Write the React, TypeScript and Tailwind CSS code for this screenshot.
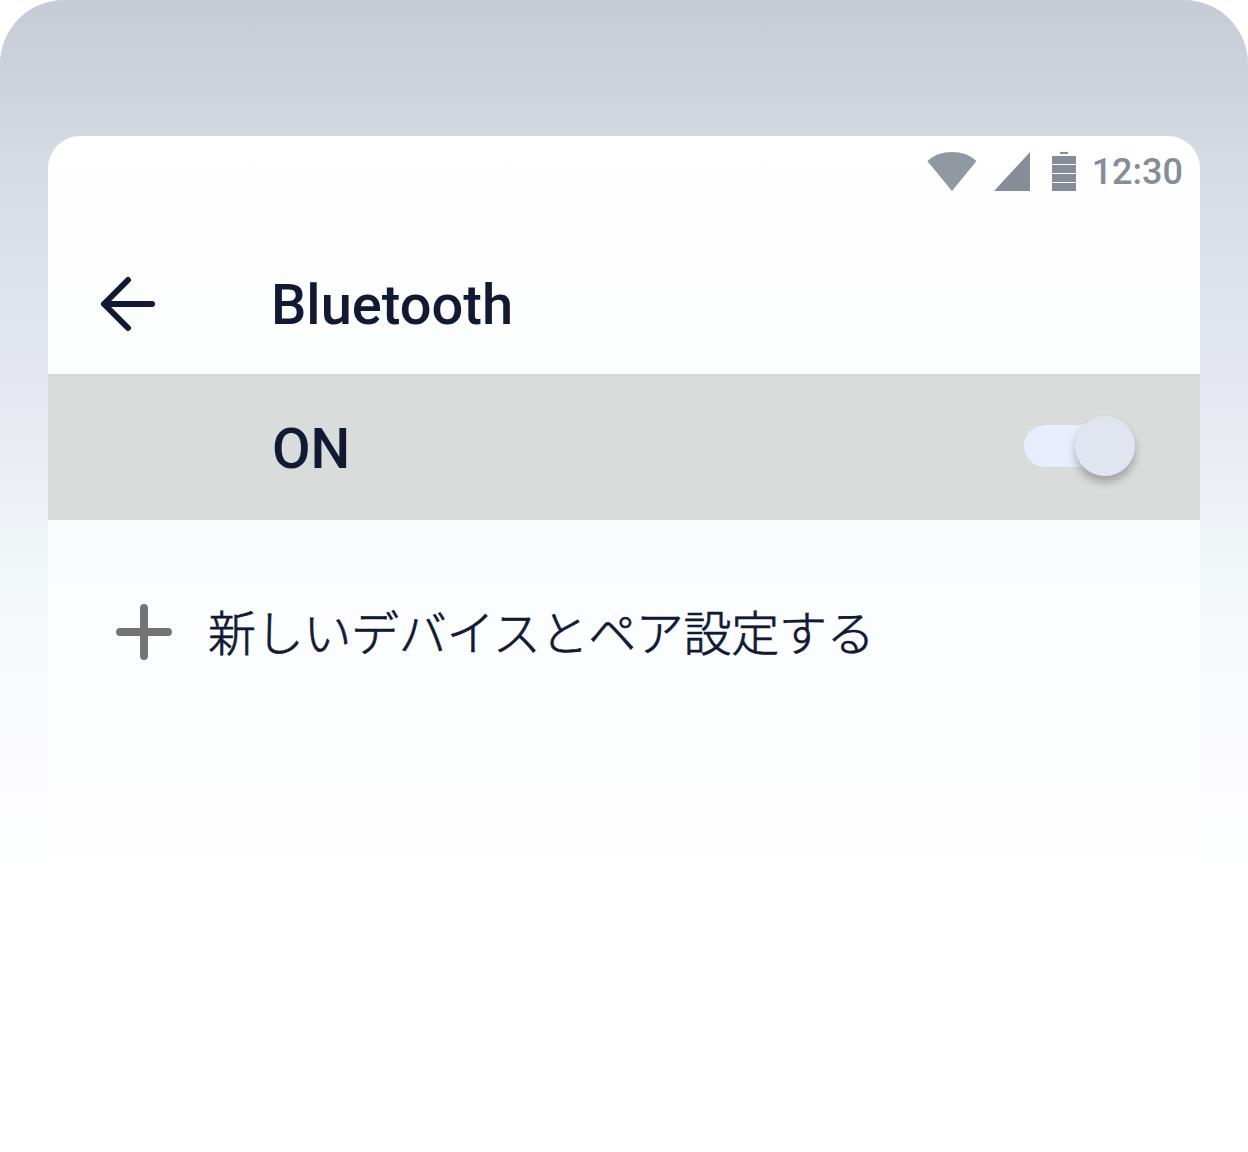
export default function App() {
  return (
    <div className="h-[1152px] w-[1248px] overflow-hidden bg-white font-[Roboto,'Noto_Sans_CJK_JP',sans-serif] text-[#101a33]">
      <div className="h-full rounded-t-[64px] bg-[linear-gradient(to_bottom,#c7cbd6_0px,#cfd3dc_90px,#d6dae2_160px,#dbdfe9_230px,#e1e5f0_330px,#e5e8ee_390px,#ebeff4_470px,#f1f6f9_560px,#f5f9fc_630px,#f9fafd_700px,#fcfcff_780px,#fdfefe_840px,#ffffff_890px)] px-12 pt-[136px]">
        <main className="h-full rounded-t-[32px] bg-[linear-gradient(to_bottom,#ffffff_0px,#fdfdfd_110px,#fcfdfd_200px,#fbfcfe_390px,#fcfdfe_500px,#fdfefe_600px,#fefefe_690px,#ffffff_760px)]">
          <div className="flex h-[72px] items-center justify-end pr-[17px] text-[#858d98]">
            <svg className="mr-[17px] h-10 w-[50px]" viewBox="0 0 50 40" fill="#9098a1">
              <path d="M.3 9Q10 0 25 0T49.500 9L25 39Z" />
            </svg>
            <svg className="mr-[21px] h-10 w-[37px]" viewBox="0 0 37 40" fill="currentColor">
              <path d="M36 0V39H0Z" />
            </svg>
            <svg className="mr-4 h-10 w-6" viewBox="0 0 24 40" fill="currentColor">
              <path d="M8 0h8v2H8zM0 4h24v8H0zM0 13h24v8H0zM0 22h24v8H0zM0 31h24v8H0z" />
            </svg>
            <span className="text-[36px] leading-[42px] font-medium">12:30</span>
          </div>
          <header className="flex h-[166px] items-center pt-[26px] pl-[52px]">
            <svg className="h-14 w-14" viewBox="0 0 56 56" fill="none" stroke="currentColor" strokeWidth="6" strokeLinecap="round" strokeLinejoin="round">
              <path d="M28 4L4 28L28 52M4 28H52" />
            </svg>
            <h1 className="mt-[2px] ml-[115px] text-[56px] font-medium">Bluetooth</h1>
          </header>
          <section className="flex h-[146px] items-center justify-between border-t-2 border-[#d6d9dc] bg-[#dadcdc] pr-[65px] pl-[224px]">
            <span className="mt-[2px] text-[56px] font-medium">ON</span>
            <button className="relative mb-1 h-[60px] w-[111px]" aria-label="Bluetooth">
              <span className="absolute top-[9px] left-0 h-[42px] w-[90px] rounded-full bg-[#e9eefe]" />
              <span className="absolute top-0 right-0 h-[60px] w-[60px] rounded-full bg-[#e1e5f0] shadow-[0_6px_8px_rgba(0,0,0,.27)]" />
            </button>
          </section>
          <div className="flex h-[224px] items-center pl-[68px]">
            <svg className="h-14 w-14" viewBox="0 0 56 56" fill="none" stroke="#747474" strokeWidth="8" strokeLinecap="round">
              <path d="M28 4V52M4 28H52" />
            </svg>
            <span className="mt-[6px] ml-9 text-[48px] leading-none font-light tracking-[-0.3px] whitespace-nowrap [-webkit-text-stroke:0.7px_currentColor]">新しいデバイスとペア設定する</span>
          </div>
        </main>
      </div>
    </div>
  );
}
